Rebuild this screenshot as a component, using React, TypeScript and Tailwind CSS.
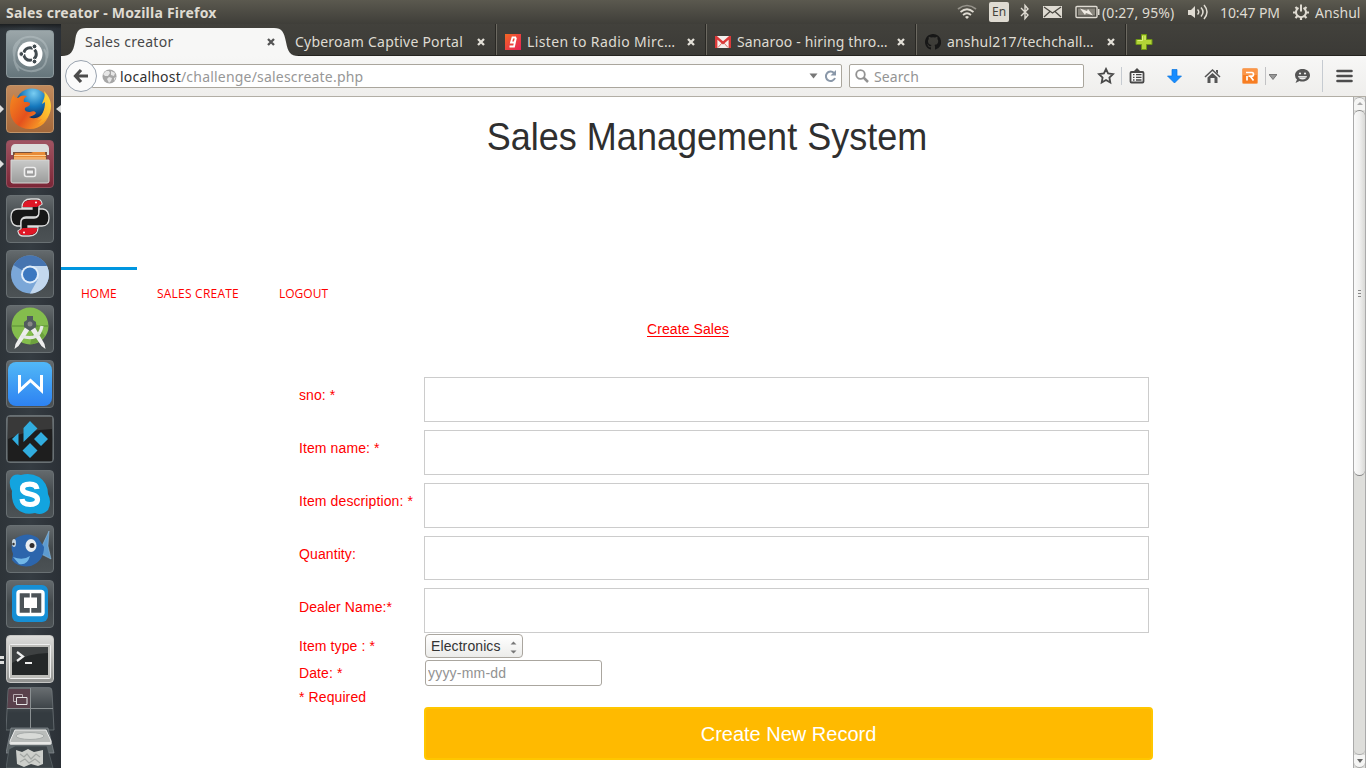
import type { ReactNode } from 'react';

const UI = "font-['Noto_Sans',sans-serif]";

function Launcher() {
  return (
    <aside className="relative flex h-full w-[61px] shrink-0 flex-col gap-[7px] overflow-hidden bg-gradient-to-r from-[#2e3439] via-[#353c42] to-[#2b3036] pl-[6px] pt-[6px]">
      <div className="absolute left-0 top-0 h-[5px] w-full bg-gradient-to-b from-[#1b1e20] to-transparent" />
      <Tile cls="from-[#9ba6a9] to-[#66767c] border-[#8d999d]">
        <path d="M8 26C5 12 18 4 31 8C40 11 43 20 41 28M8 30C12 40 24 44 34 39C40 36 43 27 38 19M14 11C7 19 6 31 13 41" stroke="#c3cdd0" strokeOpacity=".4" strokeWidth="2" fill="none" />
        <circle cx="24" cy="24" r="12.500" fill="#fff" />
        <circle cx="24" cy="24" r="6.3" fill="none" stroke="#424b50" strokeWidth="3" strokeDasharray="11.600 1.600" strokeDashoffset="5.8" />
        <circle cx="15.300" cy="24" r="2.4" fill="#424b50" stroke="#fff" />
        <circle cx="28.500" cy="16.400" r="2.4" fill="#424b50" stroke="#fff" />
        <circle cx="28.500" cy="31.600" r="2.4" fill="#424b50" stroke="#fff" />
      </Tile>
      <Tile cls="from-[#c28a5c] to-[#a4683a] border-[#c29469]">
        <defs>
          <radialGradient id="globe" cx=".55" cy=".15" r=".8"><stop stopColor="#79cdf2" /><stop offset=".5" stopColor="#1578bd" /><stop offset="1" stopColor="#0a2456" /></radialGradient>
          <linearGradient id="fox" x1="0" y1="0" x2="1" y2=".6"><stop stopColor="#f58a1f" /><stop offset=".55" stopColor="#e4511d" /><stop offset="1" stopColor="#f9a227" /></linearGradient>
          <linearGradient id="tail" x1="1" y1="0" x2=".3" y2="1"><stop stopColor="#ffe13a" /><stop offset="1" stopColor="#f9a227" /></linearGradient>
        </defs>
        <circle cx="26" cy="20" r="16.500" fill="url(#globe)" />
        <path d="M8 9C8 12 10 13 12 13C15 10 18 10 21 11C18 13 17 15 18 17C21 17 24 17 24 19C24 21 20 22 19 23C18 26 21 27 24 27C27 26 29 26 30 28C28 31 25 31 23 32C30 36 38 30 39 23L44 24C43 36 35 44 24 44C12 44 4 36 4 24C4 18 5 13 8 9Z" fill="url(#fox)" />
        <path d="M38 6C40 12 37 15 36 19L39 17C39 25 36 31 31 35L36 34L32 39C41 36 45 29 45 21C45 14 41 9 38 6Z" fill="url(#tail)" />
      </Tile>
      <Tile cls="from-[#a05361] to-[#7b2637] border-[#92505e]">
        <defs><linearGradient id="drawer" x2="0" y2="1"><stop stopColor="#c9cac9" /><stop offset="1" stopColor="#9b9c9b" /></linearGradient></defs>
        <path d="M5 8Q6 4 9 4H39Q42 4 43 8V15H5Z" fill="#dcdcda" />
        <path d="M7 12H41V20H7Z" fill="#795039" />
        <path d="M8 16L9 13H25L27 12H39L40 20H8Z" fill="#e88b37" />
        <path d="M8 15.500H40M8 18H40" stroke="#ffd195" />
        <path d="M5 20H43V41Q43 43 41 43H7Q5 43 5 41Z" fill="url(#drawer)" stroke="#d7d7d5" />
        <rect x="18.500" y="27.500" width="11" height="9" rx="2" fill="#999" stroke="#eee" strokeWidth="1.600" />
        <path d="M21 32H27" stroke="#eee" strokeWidth="3" />
      </Tile>
      <Tile>
        <path id="snake" d="M16 13Q16 4 25 4H31Q35 4 36 9L33 11V18Q33 22 28 22H20Q15 22 15 28V31H11Q5 30 5 22Q5 14 12 14H26V13Z" fill="#171717" stroke="#ddd" strokeWidth="1.300" />
        <path d="M16.600 12Q17 5 25 5H31Q35 5 35.500 9L31 12Z" fill="#df1726" />
        <g transform="rotate(180 24 22.500)">
          <path d="M16 13Q16 4 25 4H31Q35 4 36 9L33 11V18Q33 22 28 22H20Q15 22 15 28V31H11Q5 30 5 22Q5 14 12 14H26V13Z" fill="#171717" stroke="#ddd" strokeWidth="1.300" />
          <path d="M16.600 12Q17 5 25 5H31Q35 5 35.500 9L31 12Z" fill="#df1726" />
        </g>
        <circle cx="30" cy="7.500" r="1" fill="#fff" /><circle cx="18" cy="37.500" r="1" fill="#fff" />
      </Tile>
      <Tile>
        <circle cx="24" cy="24.500" r="19" fill="#7ba7d8" />
        <path d="M24 25L7.500 15A19 19 0 0 1 41 16Z" fill="#4674b0" />
        <path d="M24 16H41A19 19 0 0 1 24 43.500L32 29Z" fill="#c3d8ee" />
        <circle cx="24" cy="24.500" r="9" fill="#e2eefa" /><circle cx="24" cy="24.500" r="7" fill="#3c78c0" />
      </Tile>
      <Tile>
        <circle cx="24" cy="21" r="18.500" fill="#84bd4d" />
        <path d="M6 21H42" stroke="#588d35" /><path d="M29 17L39 31Q33 38 24 40Z" fill="#55852f" opacity=".5" />
        <path d="M21 19L9.500 39L8.500 44L12.500 41L25.500 22ZM27 19L38.500 39L39.500 44L35.500 41L22.500 22Z" fill="#ededed" />
        <path d="M15 31Q33 37 36 21" fill="none" stroke="#e5e8e5" strokeWidth="3.200" />
        <path d="M21 11H27V15L30 17V22L24 26L18 22V17L21 15Z" fill="#515b5e" /><circle cx="24" cy="19" r="2.500" fill="#888" />
      </Tile>
      <Tile>
        <defs><linearGradient id="wps" x2="0" y2="1"><stop stopColor="#51b8f7" /><stop offset="1" stopColor="#2d82f2" /></linearGradient></defs>
        <rect x="2" y="2" width="44" height="44" rx="8" fill="url(#wps)" />
        <path d="M13.500 15V30.500L24.500 20.500L35.500 30.500V15" fill="none" stroke="#fff" strokeWidth="3" />
      </Tile>
      <Tile>
        <path d="M2 2H46V46H2Z" fill="#1e1e1e" /><path d="M2 2H46V14Q20 15 2 24Z" fill="#fff" opacity=".12" />
        <path d="M24 6L31.500 13.500L17.500 27V13ZM6 24L12.500 18V31ZM35 17L42 24L35 31L28 24ZM24 28L31.500 35.500L24 43L16.500 35.500Z" fill="#31addf" />
      </Tile>
      <Tile>
        <path d="M4 10Q7 3 15 5Q24 2 33 7Q42 13 42 24Q46 32 42 40Q36 46 29 43Q18 46 10 38Q5 31 6 21Q3 16 4 10Z" fill="#13a4df" />
        <path d="M31 19C30.500 15 27 14.200 23.800 14.200C19 14.200 16.500 16 16.500 19C16.500 25.500 31.500 22.500 31.500 29.500C31.500 33 28 34.500 24 34.500C19.500 34.500 16.500 33 16 29" fill="none" stroke="#fff" strokeWidth="5.200" />
      </Tile>
      <Tile>
        <path d="M36 21L43 6L42 21L45 34L35 29Z" fill="#5d9bd0" stroke="#9ac5e5" strokeWidth=".5" />
        <path d="M10 13Q22 6 32 13L38 22Q38 36 25 41Q12 43 6 35L7 29Q3 20 10 13Z" fill="#2c65ac" />
        <path d="M7 32Q17 36 24 31Q21 41 13 39Z" fill="#71b7e7" />
        <ellipse cx="25" cy="20.500" rx="5.500" ry="6.500" fill="#e9edf0" /><circle cx="26" cy="20.500" r="2.500" fill="#302c2e" />
        <ellipse cx="8" cy="18" rx="2" ry="4" fill="#c5d3dd" /><circle cx="7.500" cy="19" r="1.200" fill="#333" />
      </Tile>
      <Tile>
        <rect x="6" y="5" width="36" height="37" rx="6" fill="#168fd5" />
        <rect x="12" y="11.500" width="25" height="23" rx="2" fill="#4b5358" stroke="#fff" strokeWidth="3.400" />
        <path d="M18 17.500H31V28H18Z" fill="#fff" /><path d="M24.500 12V34" stroke="#fff" strokeWidth="1.500" />
      </Tile>
      <Tile cls="from-[#dddddb] to-[#929391] border-[#c6c6c4]">
        <rect x="3.500" y="9.500" width="41" height="34" rx="1" fill="#bdbdb9" stroke="#eee" />
        <path d="M6 12H42V40H6Z" fill="#242728" /><path d="M6 12H42V18Q22 18 6 28Z" fill="#505353" opacity=".6" />
        <path d="M11 17L17 21.500L11 26M19 28H26" stroke="#eee" strokeWidth="2.200" fill="none" />
      </Tile>
      <svg className="-mt-[3px] shrink-0" width="50" height="81" viewBox="0 0 50 81">
        <defs><linearGradient id="workspace" x2="0" y2="1"><stop stopColor="#696e71" /><stop offset=".6" stopColor="#343b40" /></linearGradient></defs>
        <path d="M4 0.500H43Q46 0.500 46 4L48 43H0L2 4Q2 0.500 4 0.500Z" fill="url(#workspace)" stroke="#747b7f" strokeOpacity=".7" />
        <path d="M2.500 2H24V21H1.500Z" fill="#59414c" /><path d="M24.500 1V41M1 21.500H47" stroke="#8a9092" />
        <path d="M7.500 7.500H16.500V14.500H7.500Z" fill="#59414c" stroke="#b9aeb3" /><path d="M10.500 10.500H21V17.500H10.500Z" fill="#59414c" stroke="#e5e5e5" />
        <path d="M5 41H42L48 66H0Z" fill="#5e6669" stroke="#899094" strokeOpacity=".7" />
        <path d="M9 43H40L45 54V57H4V54Z" fill="#b9bcba" stroke="#ededed" />
        <path d="M4.500 55H44.500V57.500H4.500Z" fill="#e8e8e6" />
        <ellipse cx="24" cy="49" rx="14" ry="3.500" fill="#d8dad7" stroke="#a6aaa9" />
        <path d="M3 62L9 59H41L47 81H0Z" fill="#3c4347" stroke="#697377" strokeOpacity=".6" />
        <path d="M10 63L16 65L22 62L28 65L37 63L37 77L32 79L25 77L18 80L11 77Z" fill="#cdcfcb" />
        <path d="M14 67L18 70L21 67L25 72L30 67L34 70M14 75L19 72L23 76L29 72L34 76" fill="none" stroke="#a2a6a3" strokeWidth="1.200" />
      </svg>
      <svg className="pointer-events-none absolute left-0 top-0" width="61" height="744" viewBox="0 0 61 744">
        <path d="M0 81L4 85L0 89M0 136L4 140L0 144M61 81L56 85L61 89M0 632H4V635H0ZM0 637H4V640H0Z" fill="#dddedd" />
      </svg>
    </aside>
  );
}

function Tile({ children, cls = 'from-[#646a6d] via-[#43494c] to-[#4c5255] border-[#697073]' }: { children: ReactNode; cls?: string }) {
  return (
    <div className={`h-12 w-12 shrink-0 overflow-hidden rounded-[4px] border bg-gradient-to-b ${cls}`}>
      <svg className="-m-px max-w-none" width="48" height="48" viewBox="0 0 48 48">{children}</svg>
    </div>
  );
}

function TopBar() {
  return (
    <header className={`flex h-6 shrink-0 items-center bg-gradient-to-b from-[#5b594f] to-[#3f3e39] text-[#dfdbd2] ${UI}`}>
      <div className="w-[957px] shrink-0 whitespace-nowrap pl-[6px] text-[14px] font-bold tracking-[0.23px]">Sales creator - Mozilla Firefox</div>
      <svg className="shrink-0" width="20" height="18" viewBox="0 0 20 18" fill="none" strokeWidth="1.700">
        <path d="M1 6Q10-1 19 6" stroke="#96938b" /><path d="M3.500 9Q10 3.500 16.500 9M6 12Q10 8.500 14 12" stroke="#dfdbd2" /><path d="M8 14Q10 12 12 14L10 16Z" fill="#dfdbd2" />
      </svg>
      <div className="ml-3 flex h-5 w-5 shrink-0 items-center justify-center rounded-[2px] bg-[#dfdbd2] text-[12px] text-[#45433d]">En</div>
      <svg className="ml-[11px] shrink-0" width="10" height="18" viewBox="0 0 10 18" fill="none" stroke="#dfdbd2" strokeWidth="1.400"><path d="M1 5L8 12L5 15.500V2.500L8 6L1 13" /></svg>
      <svg className="ml-[13px] shrink-0" width="19" height="14" viewBox="0 0 19 14"><path d="M0 1H19V13H0Z" fill="#dfdbd2" /><path d="M1 2L9.500 8L18 2M1 12L7 6.500M18 12L12 6.500" fill="none" stroke="#4b4942" strokeWidth="1.300" /></svg>
      <svg className="ml-[13px] shrink-0" width="25" height="14" viewBox="0 0 25 14"><rect x="1" y="1.500" width="21" height="11" rx="1" fill="none" stroke="#dfdbd2" strokeWidth="1.400" /><path d="M3 3.500H20V10.500H3Z" fill="#88857c" /><path d="M23 4H24.500V10H23Z" fill="#dfdbd2" /><path d="M5 3.500L12 6L13 4L18 10.500L11 8L10 10Z" fill="#eeeae2" /></svg>
      <span className="ml-[2px] w-[75px] shrink-0 whitespace-nowrap text-[14px] tracking-[0.1px]">(0:27, 95%)</span>
      <svg className="ml-[11px] shrink-0" width="21" height="16" viewBox="0 0 21 16"><path d="M0 6H3L7 2V14L3 11H0Z" fill="#dfdbd2" /><path d="M9.500 5.500Q12 8 9.500 10.500M13 3.500Q17 8 13 12.500M16 1Q22 8 16 15" stroke="#dfdbd2" strokeWidth="1.500" fill="none" /></svg>
      <span className="ml-[11px] w-[63px] shrink-0 whitespace-nowrap text-[14px] tracking-[-0.08px]">10:47 PM</span>
      <svg className="ml-[9px] shrink-0" width="18" height="18" viewBox="0 0 18 18" fill="none" stroke="#dfdbd2"><path d="M11.500 4.800A5 5 0 1 1 6.500 4.800" strokeWidth="2" /><path d="M9 1.500V8.500" strokeWidth="2" /><path d="M3.500 4L5.500 6M14.500 4L12.500 6M1 9.500H4M17 9.500H14M3.500 15L5.500 13M14.500 15L12.500 13M9 14V17" strokeWidth="2.200" /></svg>
      <span className="ml-[5px] whitespace-nowrap text-[14px] tracking-[0.05px]">Anshul</span>
    </header>
  );
}

function Close({ dark = false }: { dark?: boolean }) {
  return <svg className="shrink-0" width="10" height="10" viewBox="0 0 10 10"><path d="M2 2L8 8M8 2L2 8" stroke={dark ? '#545454' : '#e2dfd7'} strokeWidth="2.300" /></svg>;
}

function Tab({ title, titleCls, icon }: { title: string; titleCls: string; icon?: ReactNode }) {
  return (
    <div className="flex h-[31px] w-[210px] shrink-0 items-center border-r border-[#6c6961] pl-[8px] pr-[10px] pt-[4px] text-[#dfdbd2] shadow-[inset_-1px_0_#292824]">
      {icon && <span className="mr-[6px] flex w-4 shrink-0">{icon}</span>}
      <span className={`flex-1 whitespace-nowrap text-[14px] ${titleCls}`}>{title}</span>
      <Close />
    </div>
  );
}

function TabStrip() {
  return (
    <div className={`flex h-8 shrink-0 border-b border-[#24231f] bg-gradient-to-b from-[#42413c] to-[#3b3a36] ${UI}`}>
      <div className="relative flex h-8 w-[226px] shrink-0 items-center pl-6 pr-[11px] pt-[3px] text-[#484848]">
        <svg className="absolute left-0 top-0 max-w-none" width="238" height="32" viewBox="0 0 238 32"><path d="M0 32C10 32 12 28 14 18C15 8 17 4 25 4H213C221 4 223 8 225 18C227 28 229 32 238 32Z" fill="#f7f7f6" /></svg>
        <span className="relative flex-1 text-[14px] tracking-[0.3px]">Sales creator</span><span className="relative"><Close dark /></span>
      </div>
      <Tab title="Cyberoam Captive Portal" titleCls="tracking-[0.22px]" />
      <Tab title="Listen to Radio Mirc…" titleCls="tracking-[0.38px]" icon={<svg width="16" height="16" viewBox="0 0 16 16"><defs><linearGradient id="radio" x2="1" y2="1"><stop stopColor="#f36824" /><stop offset="1" stopColor="#e62056" /></linearGradient></defs><path d="M0 0H16V16H0Z" fill="url(#radio)" /><path d="M11 3.500H7.500L6 8.500H9.500L11 3.500L9 12.500H4.500" stroke="#fff" strokeWidth="1.800" fill="none" /></svg>} />
      <Tab title="Sanaroo - hiring thro…" titleCls="tracking-[0.14px]" icon={<svg width="16" height="12" viewBox="0 0 16 12"><path d="M0 0H16V12H0Z" fill="#f4f0ed" /><path d="M1.200 12V1L8 7L14.800 1V12" stroke="#db3a3a" strokeWidth="2.400" fill="none" /><path d="M3 11.500L7 7M13 11.500L9 7" stroke="#db6d65" /></svg>} />
      <Tab title="anshul217/techchall…" titleCls="tracking-[0.18px]" icon={<svg width="16" height="16" viewBox="0 0 16 16"><path fill="#171717" d="M8 0C3.600 0 0 3.600 0 8c0 3.500 2.300 6.500 5.500 7.600.4.100.5-.2.500-.4v-2c-2 .5-2.500-.5-2.700-1-.1-.2-.5-1-.9-1.200-.3-.2-.7-.5 0-.5.7 0 1.100.6 1.300.9.700 1.200 1.900.9 2.300.7.100-.5.300-.9.500-1.100C4.700 10.800 3 10.100 3 7.100c0-.9.300-1.600.8-2.200-.1-.2-.4-1 .1-2.100 0 0 .7-.2 2.200.8a7.500 7.500 0 0 1 4 0c1.500-1 2.200-.8 2.200-.8.400 1.100.2 1.900.1 2.100.5.600.8 1.300.8 2.200 0 3.100-1.900 3.700-3.700 3.900.3.200.5.700.5 1.500v2.700c0 .2.200.5.600.4A8 8 0 0 0 8 0Z" /></svg>} />
      <svg className="ml-[8px] mt-[10px]" width="18" height="16" viewBox="0 0 18 16"><path d="M6.500.5H11.500V5.500H17V10.500H11.500V15.500H6.500V10.500H1V5.500H6.500Z" fill="#b3d437" stroke="#6f9714" /><path d="M7.500 2V6.500H2.500M10 2V6" stroke="#dcf17d" fill="none" /></svg>
    </div>
  );
}

function Toolbar() {
  return (
    <div className={`flex h-[41px] shrink-0 items-center border-b border-[#b2aea5] bg-gradient-to-b from-[#f7f7f6] to-[#efeeec] pl-[4px] ${UI}`}>
      <div className="z-10 flex h-8 w-8 shrink-0 items-center justify-center rounded-full border border-[#99a3af] bg-[#fbfbfb]">
        <svg width="16" height="16" viewBox="0 0 16 16"><path d="M8 2L2.500 8L8 14M3 8H15" fill="none" stroke="#4c4c4c" strokeWidth="3.200" /></svg>
      </div>
      <div className="-ml-[5px] flex h-6 w-[750px] shrink-0 items-center rounded-r-[2px] border border-[#aaa69d] bg-white pl-[9px] pr-[4px]">
        <svg width="15" height="15" viewBox="0 0 15 15"><circle cx="7.500" cy="7.500" r="7" fill="#a6a6a6" /><path d="M1 5L4 2L7 2L8 4L6 7L3 7L1 5ZM9 2L13 4L12 7L9 6ZM7 8L10 9L9 12L7 14L5 10ZM12 9L14 8L12 12Z" fill="#e6e6e6" /></svg>
        <span className="ml-[3px] flex-1 whitespace-nowrap text-[14px] tracking-[0.2px] text-[#979797]"><span className="text-[#303030]">localhost</span>/challenge/salescreate.php</span>
        <svg className="mr-[6px]" width="9" height="6" viewBox="0 0 9 6"><path d="M.5.5H8.500L4.500 5.500Z" fill="#777" /></svg>
        <svg width="13" height="14" viewBox="0 0 13 14"><path d="M10 4A4.700 4.700 0 1 0 11 9" fill="none" stroke="#8a98a9" strokeWidth="2" /><path d="M12 1V6.500H6.500Z" fill="#8a98a9" /></svg>
      </div>
      <div className="ml-[7px] flex h-6 w-[235px] shrink-0 items-center rounded-[2px] border border-[#aaa69d] bg-white pl-[5px] text-[14px] text-[#949494]">
        <svg width="14" height="15" viewBox="0 0 14 15" fill="none" stroke="#929292"><circle cx="5.500" cy="5.500" r="4.300" strokeWidth="1.800" /><path d="M8.500 8.500L13 13" strokeWidth="2.500" /></svg>
        <span className="ml-[5px] tracking-[0.1px]">Search</span>
      </div>
      <svg className="ml-[13px]" width="18" height="18" viewBox="0 0 18 18"><path d="M9 2L11.100 6.400L16 7.100L12.400 10.500L13.300 15.500L9 13L4.700 15.500L5.600 10.500L2 7.100L6.900 6.400Z" fill="none" stroke="#494949" strokeWidth="1.800" /></svg>
      <i className="ml-[6px] h-[18px] w-px bg-[#c6cbd1]" />
      <svg className="ml-[7px]" width="16" height="17" viewBox="0 0 16 17"><rect x="1.500" y="4" width="13" height="10.500" rx="1" fill="#f7f7f7" stroke="#484848" strokeWidth="1.800" /><path d="M4 4L8 0L12 4Z" fill="#484848" /><path d="M4 6.700H5.500M7 6.700H12.500M4 9.300H5.500M7 9.300H12.500M4 12H5.500M7 12H12.500" stroke="#484848" strokeWidth="1.300" /></svg>
      <svg className="ml-[22px]" width="15" height="15" viewBox="0 0 15 15"><path d="M5 .5H10V7H14.500L7.500 14L.5 7H5Z" fill="#168cff" stroke="#0874de" strokeWidth=".7" /></svg>
      <svg className="ml-[22px]" width="17" height="16" viewBox="0 0 17 16"><path d="M1 9L8.500 2L16 9" fill="none" stroke="#555" strokeWidth="1.600" /><path d="M3.500 9.500L8.500 5L13.500 9.500V15H10.500V10H6.500V15H3.500ZM12 2H14V6L12 4Z" fill="#555" /></svg>
      <svg className="ml-[21px]" width="16" height="16" viewBox="0 0 16 16"><rect x=".5" y=".5" width="15" height="15" rx="1" fill="#f77d22" stroke="#f6a465" /><path d="M1 1H15V7H1Z" fill="#ffb06e" opacity=".5" /><path d="M4 4.500H10Q11.500 4.500 11.500 6.500Q11.500 8.200 9.500 8.200H6.500M5 12.500V8M8.500 8.500L11.500 12.500" fill="none" stroke="#fff" strokeWidth="1.700" /></svg>
      <i className="ml-[7px] h-[18px] w-px bg-[#c2c2c4]" />
      <svg className="ml-[3px]" width="8" height="7" viewBox="0 0 8 7"><path d="M0 1.500H8L4 6.500Z" fill="#999" /><path d="M0 1.500H8L4 6.500Z" stroke="#666" strokeWidth=".8" fill="none" /></svg>
      <svg className="ml-[17px]" width="17" height="16" viewBox="0 0 17 16"><path d="M8.500 1C12.700 1 16 3.600 16 7.300C16 11 12.700 13.600 8.500 13.600Q6.500 13.600 5.500 13L1.500 15L3 11.500Q1 10 1 7.300C1 3.600 4.300 1 8.500 1Z" fill="#555" /><circle cx="6" cy="5.500" r="1.100" fill="#eee" /><circle cx="11" cy="5.500" r="1.100" fill="#eee" /><path d="M4 8H13Q12 11.500 8.500 11.500Q5 11.500 4 8Z" fill="#eee" /><path d="M5 9.300H12" stroke="#999" strokeWidth=".7" /></svg>
      <i className="ml-[11px] h-8 w-px bg-[#c6cbd1]" />
      <svg className="ml-[13px]" width="17" height="14" viewBox="0 0 17 14"><path d="M1.500 2H15.500M1.500 7H15.500M1.500 12H15.500" stroke="#4c4c4c" strokeWidth="2.600" strokeLinecap="round" /></svg>
    </div>
  );
}

const fields = [
  { label: 'sno: *', row: 'h-[53px]', box: 'h-[45px]' },
  { label: 'Item name: *', row: 'h-[53px]', box: 'h-[45px]' },
  { label: 'Item description: *', row: 'h-[53px]', box: 'h-[45px]' },
  { label: 'Quantity:', row: 'h-[52px]', box: 'h-[44px]' },
  { label: 'Dealer Name:*', row: 'h-[46px]', box: 'h-[45px]', labelCls: 'pt-[9px]' },
];

function SalesForm() {
  return (
    <form className="ml-[238px] mt-[38px] w-[854px] text-[14px] leading-5 tracking-[0.1px] text-[#f00]">
      {fields.map((field) => (
        <label key={field.label} className={`flex ${field.row}`}>
          <span className={`w-[125px] shrink-0 ${field.labelCls ?? 'pt-2'}`}>{field.label}</span>
          <input className={`w-[725px] border border-[#ccc] bg-white px-3 outline-none ${field.box}`} />
        </label>
      ))}
      <div className="flex h-[26px]">
        <span className="w-[126px] pt-[2px]">Item type : *</span>
        <button type="button" className="flex h-[24px] w-[98px] items-center justify-between rounded-[4px] border border-[#aaa69f] bg-gradient-to-b from-white to-[#ececea] pl-[5px] pr-[5px] text-[#333]">
          Electronics<svg className="mt-[3px]" width="7" height="13" viewBox="0 0 7 13"><path d="M.5 3.500L3.500.5L6.500 3.500ZM.5 9.500H6.500L3.500 12.500Z" fill="#777" /></svg>
        </button>
      </div>
      <div className="flex h-[27px]">
        <span className="w-[126px] pt-[3px]">Date: *</span>
        <input placeholder="yyyy-mm-dd" className="h-[26px] w-[177px] rounded-[3px] border border-[#aaa69f] bg-white px-[2px] tracking-[0.2px] outline-none placeholder:text-[#929292]" />
      </div>
      <div className="h-[20px]">* Required</div>
      <button type="button" className="ml-[125px] flex h-[53px] w-[729px] items-center justify-center rounded-[4px] border-2 border-[#ffc600] bg-[#ffba00] text-[20px] tracking-normal text-white">Create New Record</button>
    </form>
  );
}

function Page() {
  return (
    <main className="flex min-h-0 flex-1 bg-white">
      <div className="min-w-0 flex-1 overflow-hidden font-['Liberation_Sans',sans-serif]">
        <h1 className="mt-[20px] h-[150px] scale-x-[0.936] text-center text-[38.5px] leading-10 text-[#2f2f2f]">Sales Management System</h1>
        <nav className="flex h-[50px] font-['Open_Sans',sans-serif] text-[12px] text-[#f00]">
          <a className="w-[76px] border-t-3 border-[#0096e0] pl-5 pt-[15px]">HOME</a>
          <a className="w-[122px] whitespace-nowrap pl-5 pt-[18px] tracking-[0.22px]">SALES CREATE</a>
          <a className="pl-5 pt-[18px]">LOGOUT</a>
        </nav>
        <div className="ml-[586px] mt-[4px] h-[18px] w-[82px] whitespace-nowrap text-[14px] leading-[16px] tracking-[0.08px] text-[#f00]"><span className="block h-[16px] border-b border-[#f00]">Create Sales</span></div>
        <SalesForm />
      </div>
      <div className="flex w-[13px] shrink-0 flex-col border-x border-[#aaa] bg-[#dededb]">
        <div className="flex h-[13px] shrink-0 items-center justify-center rounded-t-[6px] border-t border-[#aaa] bg-[#f5f5f4]"><svg width="6" height="4" viewBox="0 0 6 4"><path d="M0 3L3 0L6 3Z" fill="#aaa" /></svg></div>
        <div className="flex h-[366px] shrink-0 flex-col items-center justify-center gap-[2px] rounded-[6px] border-y border-[#888] bg-gradient-to-r from-[#fafafa] via-[#f0f0ef] to-[#d9d9d7]"><i className="h-px w-[3px] bg-[#888]" /><i className="h-px w-[3px] bg-[#888]" /><i className="h-px w-[3px] bg-[#888]" /></div>
        <div className="flex-1 rounded-b-[5px] border-b border-[#aaa]" />
        <div className="flex h-[13px] shrink-0 items-center justify-center rounded-b-[6px] border-b border-[#aaa] bg-[#f5f5f4]"><svg width="6" height="4" viewBox="0 0 6 4"><path d="M0 0H6L3 4Z" fill="#666" /></svg></div>
      </div>
    </main>
  );
}

export default function App() {
  return (
    <div className="flex h-[768px] w-[1366px] flex-col overflow-hidden">
      <TopBar />
      <div className="flex min-h-0 flex-1">
        <Launcher />
        <div className="flex min-w-0 flex-1 flex-col bg-white"><TabStrip /><Toolbar /><Page /></div>
      </div>
    </div>
  );
}
